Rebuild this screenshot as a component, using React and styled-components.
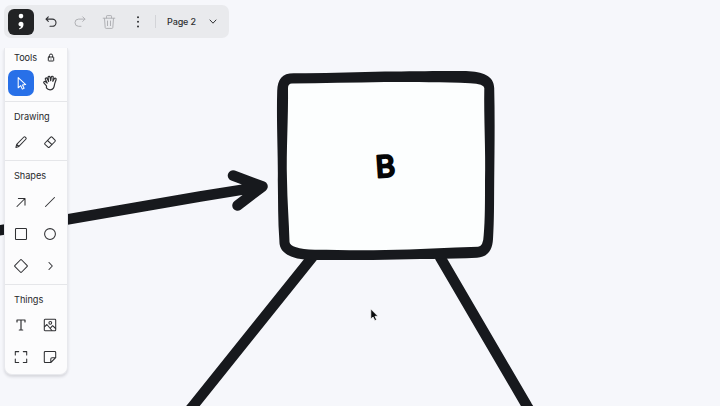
import React from "react";
import styled, { createGlobalStyle } from "styled-components";

const GlobalStyle = createGlobalStyle`
  * { box-sizing: border-box; }
  body { margin: 0; overflow: hidden; background: #f6f7fb; font-family: Inter, "Liberation Sans", sans-serif; color: #27282b; }
`;

const Editor = styled.main`
  position: relative;
  width: 720px;
  height: 406px;
  overflow: hidden;
  background: #f6f7fb;
`;

const Canvas = styled.svg`
  position: absolute;
  inset: 0;
`;

const Chrome = styled.div`
  position: relative;
  display: flex;
  flex-direction: column;
  align-items: flex-start;
  gap: 10px;
  padding: 5px 0 0 4px;
`;

const TopBar = styled.header`
  display: flex;
  align-items: center;
  width: 225px;
  height: 33px;
  padding-left: 4px;
  border-radius: 7px;
  background: #e9eaed;
`;

const LogoButton = styled.button`
  display: grid;
  place-items: center;
  width: 26px;
  height: 26px;
  margin-right: 2px;
  padding: 0;
  border: 0;
  border-radius: 6px;
  background: #222325;
`;

const BarButton = styled.button`
  display: grid;
  place-items: center;
  width: 29px;
  height: 29px;
  padding: 0;
  border: 0;
  background: none;
  color: ${(p) => (p.$muted ? "#b0b1b5" : "#303134")};
`;

const BarDivider = styled.span`
  width: 1px;
  height: 13px;
  margin: 0 11px 0 3px;
  background: #d3d4d8;
`;

const PageMenu = styled.button`
  display: flex;
  align-items: center;
  gap: 13px;
  padding: 0;
  border: 0;
  background: none;
  color: #303134;
  font: 500 9px Inter, sans-serif;
  letter-spacing: -0.1px;
`;

const Panel = styled.aside`
  width: 64px;
  height: 327px;
  border: solid #e8e9ed;
  border-width: 0 1px 1px;
  border-radius: 0 0 8px 8px;
  background: #fcfcfd;
  box-shadow: 0 2px 3px rgba(25, 30, 45, 0.14);
`;

const Section = styled.section`
  padding: ${(p) => (p.$first ? 0 : 4)}px 0 ${(p) => p.$end || 2}px;
  border-top: ${(p) => (p.$first ? "0" : "1px solid #e5e6e9")};
`;

const Heading = styled.h2`
  display: flex;
  align-items: center;
  justify-content: space-between;
  height: ${(p) => p.$height || 20}px;
  margin: 0;
  padding: 0 12px 0 9px;
  font-size: 9.2px;
  font-weight: 400;
  letter-spacing: -0.05px;
`;

const ToolGrid = styled.div`
  display: grid;
  grid-template-columns: 29px 29px;
  grid-auto-rows: 32px;
  place-items: center;
  padding-left: 1.5px;
`;

const Tool = styled.button`
  display: grid;
  place-items: center;
  width: 26px;
  height: 26px;
  padding: 0;
  border: 0;
  border-radius: 7px;
  color: ${(p) => (p.$active ? "#fff" : "#303134")};
  background: ${(p) => (p.$active ? "#2870e8" : "transparent")};
`;

const Glyph = styled.svg`
  display: block;
  fill: none;
  stroke: currentColor;
  stroke-width: ${(p) => p.$weight || 1};
  stroke-linecap: round;
  stroke-linejoin: round;
`;

const Pointer = styled.svg`
  position: absolute;
  left: 370px;
  top: 308px;
`;

const ShapeLabel = styled.text`
  font: 400 30px Lato, sans-serif;
  fill: #050607;
  stroke: #050607;
  stroke-width: 2.4px;
  stroke-linejoin: round;
`;

const paths = {
  select: <path d="M4.2 1.6v10.2l2.5-2.2 1.6 3.5 1.8-.9-1.6-3.3 3.2-.3z" />,
  hand: <path d="M3.9 9.5 1.8 7.1C.9 6.1 2.3 5 3.2 5.9L4.5 7 3 3.9c-.5-1.2 1-1.8 1.6-.7l1.2 2.5-.5-3.5c-.1-1.3 1.5-1.5 1.8-.2L7.6 5l.5-3.1c.2-1.2 1.9-1 1.7.3l-.3 3.3 1.2-2.2c.6-1.1 2-.4 1.6.8l-1.1 3.2c-.4 1.3-.3 2.9-1.2 4.2-1.3 2-4.6 2-6.1-.2z" />,
  pencil: <path d="m1.9 12.4.8-3.1L9.9 2c.8-.8 2.9 1.2 2.1 2l-7.1 7.4zM2.8 9.3l2.1 2.1" />,
  eraser: <path d="m2 8 5.7-5.8q.7-.6 1.4 0l2.9 2.9q.7.7 0 1.4l-5.6 5.7q-.7.7-1.4 0L2 9.4q-.7-.7 0-1.4Zm2.5-2.5L9 9.7" />,
  arrow: <path d="m3 11.5 8-8M4.4 3.5H11v6.6" />,
  line: <path d="m2.5 11.5 9-9" />,
  square: <rect x="1.5" y="1.5" width="11" height="11" rx=".8" />,
  circle: <circle cx="7" cy="7" r="5.4" />,
  diamond: <path d="m6.3 1-5.3 5.3q-.7.7 0 1.4L6.3 13q.7.7 1.4 0L13 7.7q.7-.7 0-1.4L7.7 1q-.7-.7-1.4 0Z" />,
  more: <path d="m6 3.5 3.3 3.5L6 10.5" />,
  text: <path d="M3 4V2h8v2M7 2v10M5.3 12h3.4" />,
  image: <><rect x="1.3" y="1.3" width="11.4" height="11.4" rx=".7" /><circle cx="7.3" cy="4.8" r="1.4" /><path d="m1.5 8.8 2.4-2.3 5 6M7.4 10.2l2.2-2.5 3 2.8" /></>,
  frame: <path d="M1.3 5V1.6h3.4M9.3 1.6h3.4V5M12.7 9v3.4H9.3M4.7 12.4H1.3V9" />,
  note: <path d="M2.2 1.5h9.6q.9 0 .9.9v5.3l-4.9 4.8H2.2q-.9 0-.9-.9V2.4q0-.9.9-.9Zm10.3 6.3H9q-1.2 0-1.2 1.2v3.3" />,
};

function Icon({ name }) {
  const size = name === "hand" ? 16 : 14;
  return <Glyph width={size} height={size} viewBox="0 0 14 14" $weight={name === "text" ? 1.2 : 1.05}>{paths[name]}</Glyph>;
}

const sections = [
  { title: "Tools", tools: ["select", "hand"], heading: 19 },
  { title: "Drawing", tools: ["pencil", "eraser"] },
  { title: "Shapes", tools: ["arrow", "line", "square", "circle", "diamond", "more"], heading: 21 },
  { title: "Things", tools: ["text", "image", "frame", "note"] },
];

function Drawing() {
  return (
    <Canvas width="720" height="406" viewBox="0 0 720 406">
      <g fill="none" stroke="#17191d" strokeLinecap="round" strokeLinejoin="round" strokeWidth="10.5">
        <path d="M-8 231.5 67 219.5 200 196.5l62-10M233 175.5l29.5 11-25 19" />
        <path d="M312.5 257 193 406l-5 6M440 257l87 149 5 8" />
      </g>
      <path fill="#17191d" d="M294 73.2C325 73.7 355 72 385 71.6C414 71.2 444 70.7 466 71.1C483 71.7 494 76 494.2 88C495 119 494.5 151 494.2 181C494 202 494.3 220 493 239C492.4 250 488 257 477 257.7C449 259.1 416 258.7 385 259.7C357 260.2 336 260.2 313 260C292 259.6 279 254 279.4 241C277.8 221 278.2 200 277.8 180C278.2 156 276.3 123 277.2 91C277.7 79 282 73.1 294 73.2Z" />
      <path fill="#fcfefe" d="M292 83.6C322 83 354 82.5 385 82C416 82.3 443 81.7 470 83.2Q484.2 84 484.3 88C483.7 118 485.8 150 485 181C485 201 485.1 220 483.7 235Q483.4 246.3 478 246.8C448 247.4 417 249.7 385 250C362 250.4 337 250.1 315 249.7Q290 248.8 289.5 242C289 221 287.2 200 287 180C286.1 150 288.4 119 288 88Q288 83.7 292 83.6Z" />
      <ShapeLabel x="375.6" y="176.8" transform="rotate(-4 386 166)">B</ShapeLabel>
    </Canvas>
  );
}

export default function App() {
  return (
    <>
      <GlobalStyle />
      <Editor>
        <Drawing />
        <Chrome>
          <TopBar>
            <LogoButton aria-label="Home">
              <svg width="16" height="20" viewBox="0 0 16 20" fill="#fff"><circle cx="8" cy="4.1" r="2.3" /><path d="M5.5 12.2a2.5 2.5 0 1 1 5 0c0 2.3-1.2 4.4-3.8 5-.7.1-.9-.7-.3-1 1.1-.6 1.6-1.2 1.6-1.8-1.5 0-2.5-.9-2.5-2.2Z" /></svg>
            </LogoButton>
            <BarButton aria-label="Undo"><Glyph width="14" height="14" viewBox="0 0 14 14" $weight={1.1}><path d="M4.3 1.8 2 4.1l2.3 2.3M2.2 4.1h6.2a3.6 3.6 0 0 1 0 7.2H6" /></Glyph></BarButton>
            <BarButton $muted aria-label="Redo"><Glyph width="14" height="14" viewBox="0 0 14 14"><path d="M9.7 1.8 12 4.1 9.7 6.4m2.1-2.3H5.6a3.6 3.6 0 0 0 0 7.2H8" /></Glyph></BarButton>
            <BarButton $muted aria-label="Delete"><Glyph width="14" height="14" viewBox="0 0 14 14"><path d="M1.2 3.2h11.6M4.5 3V1.2q0-.6.6-.6h3.8q.6 0 .6.6V3M2.5 3.4l.7 9.2q.1.8.9.8h5.8q.8 0 .9-.8l.7-9.2M5.5 6v4.6M8.5 6v4.6" /></Glyph></BarButton>
            <BarButton aria-label="More actions"><Glyph width="4" height="14" viewBox="0 0 4 14" $weight={2}><path d="M2 2.2h.01M2 6.8h.01M2 11.4h.01" /></Glyph></BarButton>
            <BarDivider />
            <PageMenu>Page 2<Glyph width="8" height="6" viewBox="0 0 8 6"><path d="m1 1 3 3.2L7 1" /></Glyph></PageMenu>
          </TopBar>
          <Panel>
            {sections.map((section, index) => (
              <Section key={section.title} $first={index === 0} $end={section.end}>
                <Heading $height={section.heading}>
                  {section.title}
                  {index === 0 && <Glyph width="8" height="9" viewBox="0 0 8 9"><rect x="1.3" y="4" width="5.4" height="4" rx=".5" /><path d="M2.4 4V2.6a1.6 1.6 0 0 1 3.2 0V4M4 6h.01" /></Glyph>}
                </Heading>
                <ToolGrid>
                  {section.tools.map((tool) => <Tool key={tool} aria-label={tool} $active={tool === "select"}><Icon name={tool} /></Tool>)}
                </ToolGrid>
              </Section>
            ))}
          </Panel>
        </Chrome>
        <Pointer width="10" height="15" viewBox="0 0 10 15"><path d="M.8 1v10l2.3-2 1.7 3.6 1.8-.9-1.7-3.4H8z" fill="#090a0c" stroke="#fff" strokeWidth=".7" /></Pointer>
      </Editor>
    </>
  );
}
